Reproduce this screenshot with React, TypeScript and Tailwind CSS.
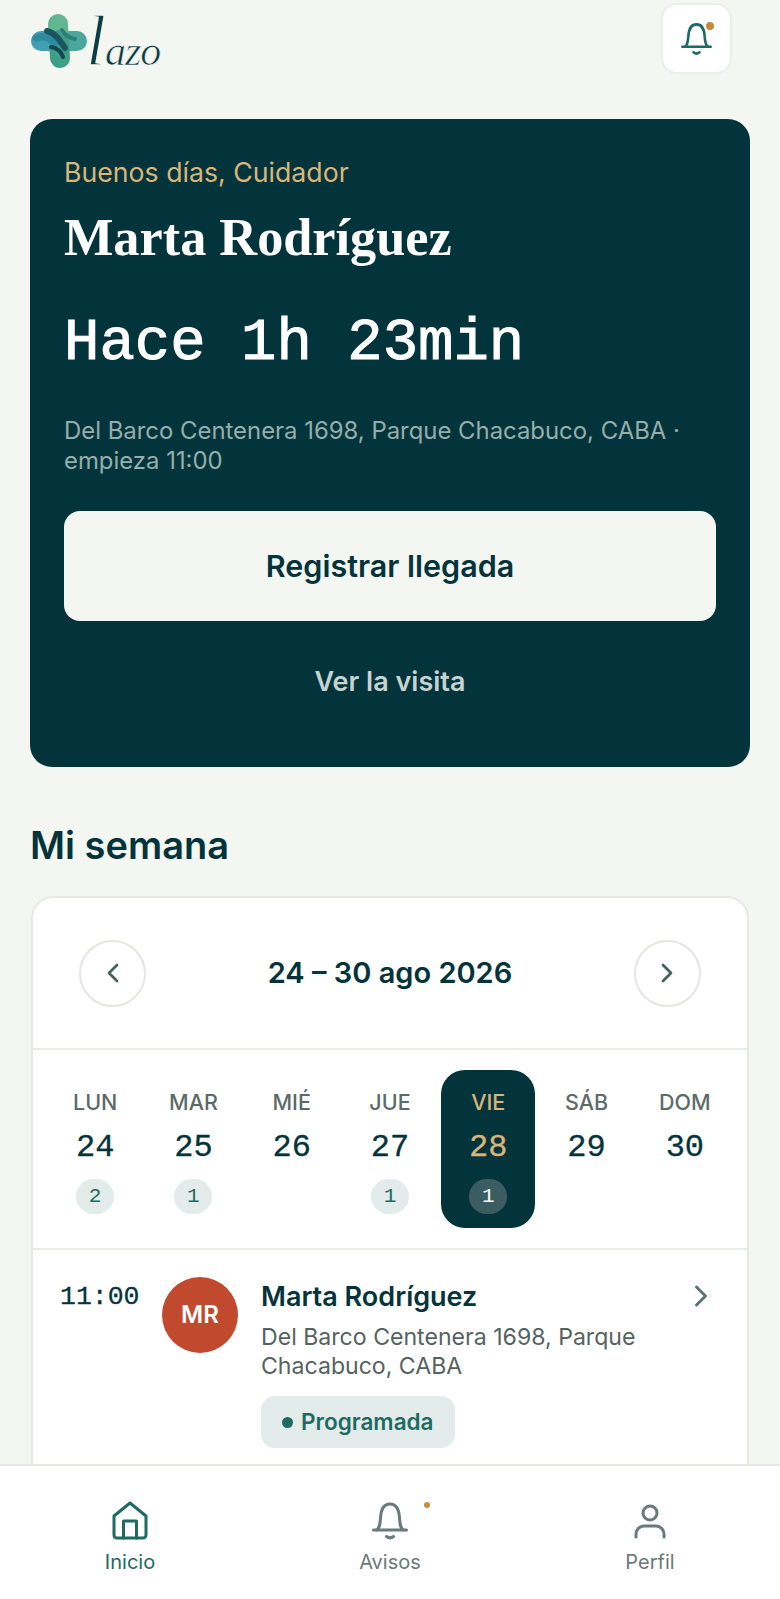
import { ChevronLeft, ChevronRight } from "lucide-react";

const days = [
  { label: "LUN", num: "24", count: "2" },
  { label: "MAR", num: "25", count: "1" },
  { label: "MIÉ", num: "26" },
  { label: "JUE", num: "27", count: "1" },
  { label: "VIE", num: "28", count: "1", active: true },
  { label: "SÁB", num: "29" },
  { label: "DOM", num: "30" },
];

const BellIcon = ({ className }: { className?: string }) => (
  <svg viewBox="0 0 36 38" fill="none" stroke="currentColor" strokeWidth="3" strokeLinecap="round" strokeLinejoin="round" className={className}>
    <path d="M1.500 28h33" />
    <path d="M5 28c3-3 3-6 3.500-12C9 7 12 2 18 2s9 5 9.500 14c.5 6 .5 9 3.500 12" />
    <path d="M14.500 34.500c2 1.600 5 1.600 7 0" />
  </svg>
);

const Logo = () => (
  <div className="flex items-start">
    <svg viewBox="0 0 56 54" fill="none" strokeLinecap="round" className="w-[56px] h-[54px] ml-[1px] mt-[14px] shrink-0">
      <path d="M10 27H28" stroke="#3fa0b3" strokeWidth="20" />
      <path d="M28 27H46" stroke="#4aa79c" strokeWidth="20" />
      <path d="M27 10 28 30" stroke="#62b691" strokeWidth="20" />
      <path d="M28 26 29 44" stroke="#3f9e86" strokeWidth="20" />
      <path d="M5 24c8-3 14 0 19 6" stroke="#2f8aa0" strokeWidth="7" />
      <path d="M16 17c8 2 12 8 18 17" stroke="#1a5561" strokeWidth="6" />
      <path d="M20 33c6 1 10 4 12 10" stroke="#14464f" strokeWidth="4" />
      <path d="M31 16c3 5 7 8 13 9" stroke="#2c7f78" strokeWidth="4" />
    </svg>
    <div className="flex items-baseline mt-[5px] -ml-[1px] text-[#0b3d45] italic font-['Liberation_Serif',serif]">
      <span className="text-[72px] leading-[72px] [-webkit-text-stroke:1.500px_#f4f6f1] [paint-order:fill_stroke]">l</span>
      <span className="text-[42px] leading-[42px] -ml-[1px] tracking-[-1px] [-webkit-text-stroke:0.700px_#f4f6f1] [paint-order:fill_stroke]">azo</span>
    </div>
  </div>
);

export default function App() {
  return (
    <div className="w-[780px] h-[1599px] overflow-hidden flex flex-col bg-[#f4f6f1] font-['Inter',sans-serif] text-[#04343b]">
      <div className="flex-1 min-h-0 overflow-hidden px-[30px]">
        <header className="h-[119px] flex items-start justify-between">
          <Logo />
          <div className="relative mt-[3px] mr-[18px] w-[71px] h-[71px] rounded-[16px] bg-white border-2 border-[#eceee9] flex items-center justify-center text-[#1b6a63]">
            <BellIcon className="w-[31px] h-[34px]" />
            <span className="absolute top-[17px] right-[16px] w-[8px] h-[8px] rounded-full bg-[#c98a3c]" />
          </div>
        </header>

        <section className="h-[648px] rounded-[22px] bg-[#04343b] px-[34px] pt-[35px]">
          <p className="text-[26.700px] leading-[36px] text-[#d9b57a]">Buenos días, Cuidador</p>
          <h1 className="mt-[17px] text-[52.300px] leading-[60px] font-bold text-white font-['Liberation_Serif',serif]">Marta Rodríguez</h1>
          <p className="mt-[37px] text-[59px] leading-[80px] text-white [-webkit-text-stroke:1px_white] font-['Liberation_Mono',monospace]">Hace 1h 23min</p>
          <p className="mt-[32px] text-[23.900px] leading-[30px] text-[#93aeac]">
            Del Barco Centenera 1698, Parque Chacabuco, CABA · empieza 11:00
          </p>
          <button className="mt-[35px] w-full h-[110px] rounded-[16px] bg-[#f4f6f1] text-[30.500px] font-semibold text-[#04343b]">
            Registrar llegada
          </button>
          <p className="mt-[43px] text-center text-[27px] leading-[36px] font-semibold text-[#c5d3d1]">Ver la visita</p>
        </section>

        <h2 className="mt-[55px] text-[38px] leading-[46px] font-semibold">Mi semana</h2>

        <section className="mt-[28px] mx-[1px] rounded-t-[22px] bg-white border-2 border-[#e6e8e3] pb-[40px]">
          <div className="h-[152px] px-[46px] flex items-center justify-between border-b-2 border-[#e9ebe6]">
            <button className="w-[67px] h-[67px] rounded-full border-2 border-[#e4e6e1] flex items-center justify-center text-[#44605f]">
              <ChevronLeft className="w-[32px] h-[32px]" strokeWidth={2} />
            </button>
            <p className="text-[29px] font-semibold">24 – 30 ago 2026</p>
            <button className="w-[67px] h-[67px] rounded-full border-2 border-[#e4e6e1] flex items-center justify-center text-[#44605f]">
              <ChevronRight className="w-[32px] h-[32px]" strokeWidth={2} />
            </button>
          </div>

          <div className="h-[200px] px-[15px] pt-[20px] grid grid-cols-7 gap-[4px] border-b-2 border-[#e9ebe6]">
            {days.map((d) => (
              <div
                key={d.label}
                className={`h-[158px] rounded-[24px] flex flex-col items-center pt-[18px] ${d.active ? "bg-[#04343b]" : ""}`}
              >
                <span className={`text-[21.500px] leading-[28px] font-medium ${d.active ? "text-[#d9b57a]" : "text-[#5c6a68]"}`}>{d.label}</span>
                <span
                  className={`mt-[11px] text-[32px] leading-[42px] font-['Liberation_Mono',monospace] ${
                    d.active ? "text-[#d9b57a] [-webkit-text-stroke:0.3px_#d9b57a]" : "text-[#04343b] [-webkit-text-stroke:0.3px_#04343b]"
                  }`}
                >
                  {d.num}
                </span>
                {d.count && (
                  <span
                    className={`mt-[10px] w-[38px] h-[35px] rounded-full flex items-center justify-center text-[21px] font-['Liberation_Mono',monospace] ${
                      d.active ? "bg-[#3b5d62] text-white" : "bg-[#e3ecea] text-[#1e6b62]"
                    }`}
                  >
                    {d.count}
                  </span>
                )}
              </div>
            ))}
          </div>

          <div className="flex pl-[27px] pr-[28px] pt-[29px]">
            <span className="w-[102px] shrink-0 text-[26.500px] leading-[36px] [-webkit-text-stroke:0.3px_#04343b] font-['Liberation_Mono',monospace]">11:00</span>
            <div className="w-[76px] h-[76px] shrink-0 -mt-[2px] rounded-full bg-[#c1492e] flex items-center justify-center text-[24px] font-semibold text-white">MR</div>
            <div className="ml-[23px] flex-1 min-w-0 -mt-[2px]">
              <p className="text-[27px] leading-[40px] font-semibold">Marta Rodríguez</p>
              <p className="mt-[6px] text-[23.100px] leading-[29px] text-[#55625f]">Del Barco Centenera 1698, Parque Chacabuco, CABA</p>
              <span className="mt-[15px] inline-flex items-center gap-[8px] h-[52px] px-[21px] rounded-[14px] bg-[#e3ecea] text-[22.500px] font-semibold text-[#1e6b62]">
                <span className="w-[11px] h-[11px] rounded-full bg-[#1e6b62]" />
                Programada
              </span>
            </div>
            <ChevronRight className="w-[36px] h-[36px] -mt-[1px] shrink-0 text-[#5f7472]" strokeWidth={2} />
          </div>
        </section>
      </div>

      <nav className="h-[135px] shrink-0 bg-white border-t-2 border-[#e6e8e3] grid grid-cols-3">
        <div className="flex flex-col items-center pt-[35px] text-[#1e6b62]">
          <svg viewBox="0 0 36 40" fill="none" stroke="currentColor" strokeWidth="3" strokeLinejoin="round" strokeLinecap="round" className="w-[36px] h-[40px]">
            <path d="M2 15 18 2l16 13v19a3 3 0 0 1-3 3H5a3 3 0 0 1-3-3Z" />
            <path d="M11.500 37V20h13v17" />
          </svg>
          <span className="mt-[7px] text-[20px] leading-[28px]">Inicio</span>
        </div>
        <div className="relative flex flex-col items-center pt-[35px] text-[#6a7a78]">
          <BellIcon className="w-[36px] h-[40px]" />
          <span className="absolute top-[36px] left-[164px] w-[6px] h-[6px] rounded-full bg-[#c98a3c]" />
          <span className="mt-[7px] text-[20px] leading-[28px]">Avisos</span>
        </div>
        <div className="flex flex-col items-center pt-[35px] text-[#6a7a78]">
          <svg viewBox="0 0 32 40" fill="none" stroke="currentColor" strokeWidth="3" strokeLinecap="round" className="w-[32px] h-[40px]">
            <circle cx="16" cy="12" r="7" />
            <path d="M2 36v-3a8 8 0 0 1 8-8h12a8 8 0 0 1 8 8v3" />
          </svg>
          <span className="mt-[7px] text-[20px] leading-[28px]">Perfil</span>
        </div>
      </nav>
    </div>
  );
}
